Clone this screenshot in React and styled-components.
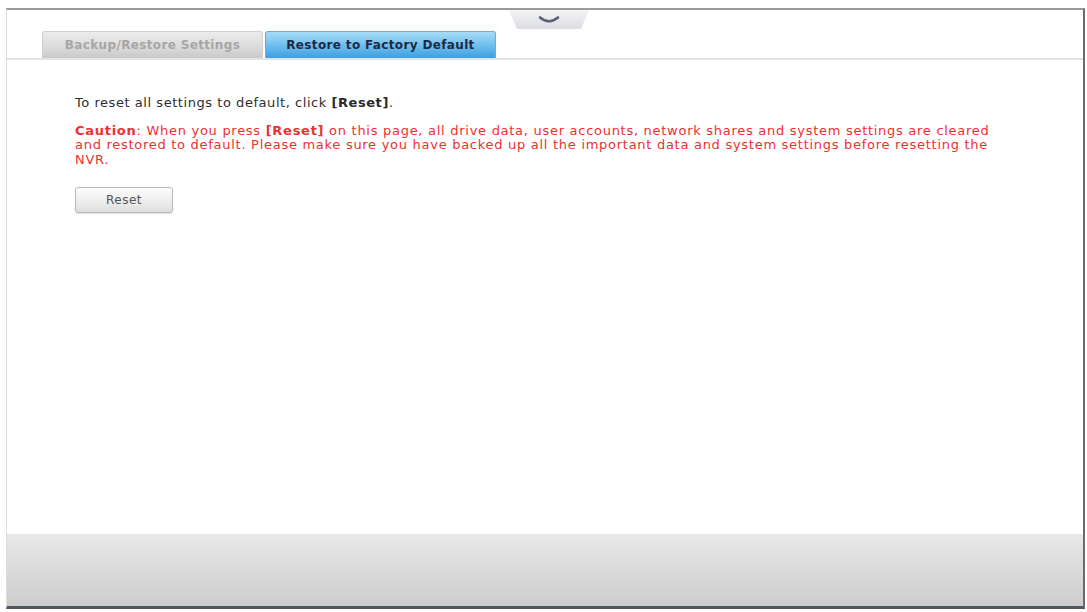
import React from "react";
import styled, { createGlobalStyle } from "styled-components";

const Global = createGlobalStyle`
  html, body { margin: 0; padding: 0; background: #ffffff; }
  body { width: 1087px; height: 612px; overflow: hidden; font-family: "DejaVu Sans", Verdana, sans-serif; }
`;

const Frame = styled.div`
  position: relative;
  box-sizing: border-box;
  margin: 8px 0 0 6px;
  width: 1079px;
  height: 601px;
  display: flex;
  flex-direction: column;
  border-top: 2px solid #9a9a9a;
  border-right: 2px solid #6a6a70;
  border-bottom: 3px solid #4f5660;
  border-left: 1px solid #dcdcdc;
  background: #ffffff;
`;

const Handle = styled.div`
  position: absolute;
  top: 0;
  left: 502px;
  width: 80px;
  height: 19px;
  background: linear-gradient(#f4f4f6, #dcdde2);
  border-radius: 0 0 10px 10px;
  clip-path: polygon(0 0, 100% 0, 90% 100%, 10% 100%);
  display: flex;
  align-items: center;
  justify-content: center;
`;

const TabBar = styled.div`
  height: 48px;
  display: flex;
  align-items: flex-end;
  padding-left: 35px;
  gap: 2px;
  border-bottom: 2px solid #e4e4e4;
`;

const Tab = styled.div`
  box-sizing: border-box;
  width: ${(p) => p.$w}px;
  height: 27px;
  display: flex;
  align-items: center;
  justify-content: center;
  font-size: 12px;
  letter-spacing: 0.35px;
  font-weight: bold;
  border-radius: 3px 3px 0 0;
  color: ${(p) => (p.$active ? "#1d2a44" : "#a6a6a6")};
  background: ${(p) =>
    p.$active
      ? "linear-gradient(#a8dcf6, #6cbcee 55%, #3e9fe0)"
      : "linear-gradient(#ececec, #dadada 60%, #c9c9c9)"};
  border: 1px solid ${(p) => (p.$active ? "#5fb0e6" : "#d0d0d0")};
  border-bottom: none;
`;

const Content = styled.div`
  flex: 1;
  padding: 36px 0 0 68px;
`;

const Line = styled.p`
  margin: 0;
  font-size: 13px;
  letter-spacing: ${(p) => (p.$warn ? "0.72px" : "0.55px")};
  line-height: 14.5px;
  color: ${(p) => (p.$warn ? "#ef2f31" : "#2e2e2e")};
  & + & { margin-top: 13px; }
`;

const Strong = styled.b`
  font-weight: bold;
  color: ${(p) => (p.$dark ? "#2a2a2a" : "inherit")};
`;

const Button = styled.button`
  margin-top: 20px;
  width: 98px;
  height: 26px;
  border: 1px solid #b9b9b9;
  border-radius: 3px;
  background: linear-gradient(#fbfbfb, #ececec 60%, #dedede);
  font-family: "DejaVu Sans", Verdana, sans-serif;
  font-size: 12px;
  letter-spacing: 0.5px;
  color: #555;
  padding: 0;
  box-shadow: 0 1px 1px rgba(0,0,0,0.12);
`;

const Footer = styled.div`
  height: 72px;
  background: linear-gradient(#e8e8e8, #dadada 50%, #cdcdcd);
`;

export default function App() {
  return (
    <>
      <Global />
      <Frame>
        <Handle>
          <svg width="22" height="8" viewBox="0 0 22 8">
            <path d="M2 1.5 Q11 9 20 1.5" fill="none" stroke="#5b6273" strokeWidth="2.6" strokeLinecap="round" />
          </svg>
        </Handle>
        <TabBar>
          <Tab $w={221}>Backup/Restore Settings</Tab>
          <Tab $w={231} $active>Restore to Factory Default</Tab>
        </TabBar>
        <Content>
          <Line>
            To reset all settings to default, click <Strong $dark>[Reset]</Strong>.
          </Line>
          <Line $warn>
            <Strong>Caution</Strong>: When you press <Strong>[Reset]</Strong> on this page, all drive data, user accounts, network shares and system settings are cleared
            <br />
            and restored to default. Please make sure you have backed up all the important data and system settings before resetting the
            <br />
            NVR.
          </Line>
          <Button>Reset</Button>
        </Content>
        <Footer />
      </Frame>
    </>
  );
}
